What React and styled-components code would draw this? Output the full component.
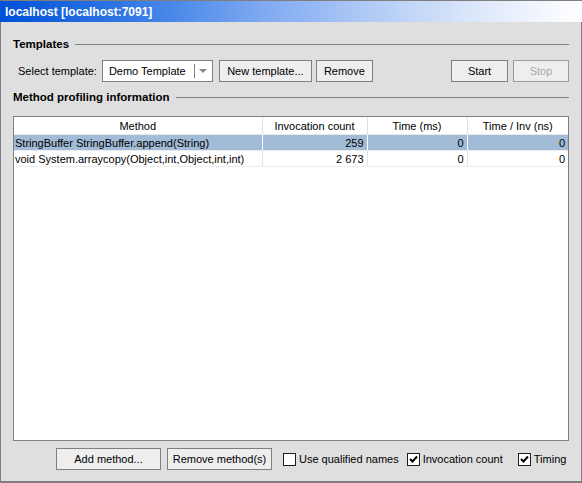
import React from "react";
import styled, { createGlobalStyle } from "styled-components";

const Global = createGlobalStyle`
  html, body { margin: 0; padding: 0; background: #ffffff; }
  body { font-family: "Liberation Sans", Arial, sans-serif; font-size: 11px; color: #000; }
`;

const Window = styled.div`
  width: 582px;
  height: 483px;
  box-sizing: border-box;
  display: flex;
  flex-direction: column;
  background: #dfdfdf;
  border: 1px solid #7f7f7f;
  border-top: none;
  border-bottom-width: 2px;
`;

const TitleBar = styled.div`
  height: 22px;
  flex: none;
  display: flex;
  align-items: center;
  padding-left: 5px;
  margin: 0 -1px;
  border-top: 1px solid #7f7f7f;
  box-sizing: border-box;
  background: linear-gradient(to right, #0050d8 0%, #3a7ee6 25%, #7fa9f1 45%, #b4cdf6 65%, #dde8fb 82%, #ffffff 100%);
  color: #fff;
  font-family: "Liberation Sans", Arial, sans-serif;
  font-weight: bold;
  font-size: 12px;
`;

const Body = styled.div`
  flex: 1;
  display: flex;
  flex-direction: column;
  padding: 15px 12px 11px 12px;
  min-height: 0;
`;

const Section = styled.div`
  display: flex;
  align-items: center;
  gap: 6px;
  height: 14px;
  margin-top: ${(p) => p.$top || 0}px;
  font-weight: bold;
  font-size: 11.5px;
  &::after {
    content: "";
    flex: 1;
    height: 1px;
    background: #808080;
  }
`;

const Toolbar = styled.div`
  display: flex;
  align-items: center;
  height: 22px;
  margin-top: 9px;
  padding-left: 5px;
`;

const Label = styled.span`
  margin-right: 5px;
  white-space: nowrap;
`;

const Combo = styled.div`
  width: 111px;
  height: 22px;
  box-sizing: border-box;
  background: #fff;
  border: 1px solid #808080;
  display: flex;
  align-items: center;
  padding-left: 6px;
  margin-right: 6px;
  flex: none;
`;

const ComboText = styled.span`
  flex: 1;
`;

const ComboArrow = styled.span`
  width: 17px;
  height: 14px;
  border-left: 1px solid #808080;
  display: flex;
  align-items: center;
  justify-content: center;
  &::after {
    content: "";
    border-left: 4px solid transparent;
    border-right: 4px solid transparent;
    border-top: 4px solid #8a8a8a;
  }
`;

const Button = styled.button`
  height: 22px;
  width: ${(p) => p.$w}px;
  margin-left: ${(p) => p.$ml || 0}px;
  box-sizing: border-box;
  padding: 0;
  background: #eeeeee;
  border: 1px solid ${(p) => (p.disabled ? "#9a9a9a" : "#808080")};
  font-family: "Liberation Sans", Arial, sans-serif;
  font-size: 11px;
  color: ${(p) => (p.disabled ? "#a8a8a8" : "#000")};
  white-space: nowrap;
  flex: none;
`;

const Spacer = styled.div`
  flex: 1;
`;

const TableBox = styled.div`
  flex: 1;
  margin-top: 12px;
  background: #fff;
  border: 1px solid #808080;
`;

const Grid = styled.table`
  width: 100%;
  border-collapse: collapse;
  table-layout: fixed;
  font-size: 11px;
`;

const Th = styled.th`
  font-weight: normal;
  height: 17px;
  padding: 0;
  text-align: center;
  border-right: 1px solid #e0e0e0;
  border-bottom: 1px solid #e8e8e8;
  &:last-child { border-right: none; }
`;

const Td = styled.td`
  height: 15px;
  padding: 0 3px 0 1px;
  text-align: ${(p) => (p.$num ? "right" : "left")};
  white-space: nowrap;
  overflow: hidden;
  background: ${(p) => (p.$sel ? "#a2bbd6" : "#fff")};
  border-right: 1px solid ${(p) => (p.$sel ? "#ffffff" : "#e4e4e4")};
  border-bottom: 1px solid #ececec;
  &:last-child { border-right: none; }
`;

const Footer = styled.div`
  display: flex;
  align-items: center;
  height: 22px;
  margin-top: 7px;
  padding-left: 43px;
`;

const Check = styled.label`
  display: flex;
  align-items: center;
  flex: none;
  white-space: nowrap;
  margin-left: ${(p) => p.$ml}px;
  gap: 3px;
`;

const Box = styled.span`
  width: 11px;
  height: 11px;
  background: #fff;
  border: 1px solid #1c1c1c;
  display: flex;
  align-items: center;
  justify-content: center;
`;

const Tick = () => (
  <svg width="9" height="9" viewBox="0 0 9 9">
    <path d="M1 4 L3.5 6.5 L8 1.5" fill="none" stroke="#000" strokeWidth="2" />
  </svg>
);

const rows = [
  { m: "StringBuffer StringBuffer.append(String)", c: "259", t: "0", ti: "0", sel: true },
  { m: "void System.arraycopy(Object,int,Object,int,int)", c: "2 673", t: "0", ti: "0" },
];

export default function App() {
  return (
    <>
      <Global />
      <Window>
        <TitleBar>localhost [localhost:7091]</TitleBar>
        <Body>
          <Section>Templates</Section>
          <Toolbar>
            <Label>Select template:</Label>
            <Combo>
              <ComboText>Demo Template</ComboText>
              <ComboArrow />
            </Combo>
            <Button $w={93}>New template...</Button>
            <Button $w={57} $ml={4}>Remove</Button>
            <Spacer />
            <Button $w={57}>Start</Button>
            <Button $w={56} $ml={5} disabled>Stop</Button>
          </Toolbar>
          <Section $top={8}>Method profiling information</Section>
          <TableBox>
            <Grid>
              <colgroup>
                <col style={{ width: 248 }} />
                <col style={{ width: 105 }} />
                <col style={{ width: 100 }} />
                <col />
              </colgroup>
              <thead>
                <tr>
                  <Th>Method</Th>
                  <Th>Invocation count</Th>
                  <Th>Time (ms)</Th>
                  <Th>Time / Inv (ns)</Th>
                </tr>
              </thead>
              <tbody>
                {rows.map((r) => (
                  <tr key={r.m}>
                    <Td $sel={r.sel}>{r.m}</Td>
                    <Td $sel={r.sel} $num>{r.c}</Td>
                    <Td $sel={r.sel} $num>{r.t}</Td>
                    <Td $sel={r.sel} $num>{r.ti}</Td>
                  </tr>
                ))}
              </tbody>
            </Grid>
          </TableBox>
          <Footer>
            <Button $w={105}>Add method...</Button>
            <Button $w={105} $ml={6}>Remove method(s)</Button>
            <Check $ml={11}><Box />Use qualified names</Check>
            <Check $ml={8}><Box><Tick /></Box>Invocation count</Check>
            <Check $ml={15}><Box><Tick /></Box>Timing</Check>
          </Footer>
        </Body>
      </Window>
    </>
  );
}
